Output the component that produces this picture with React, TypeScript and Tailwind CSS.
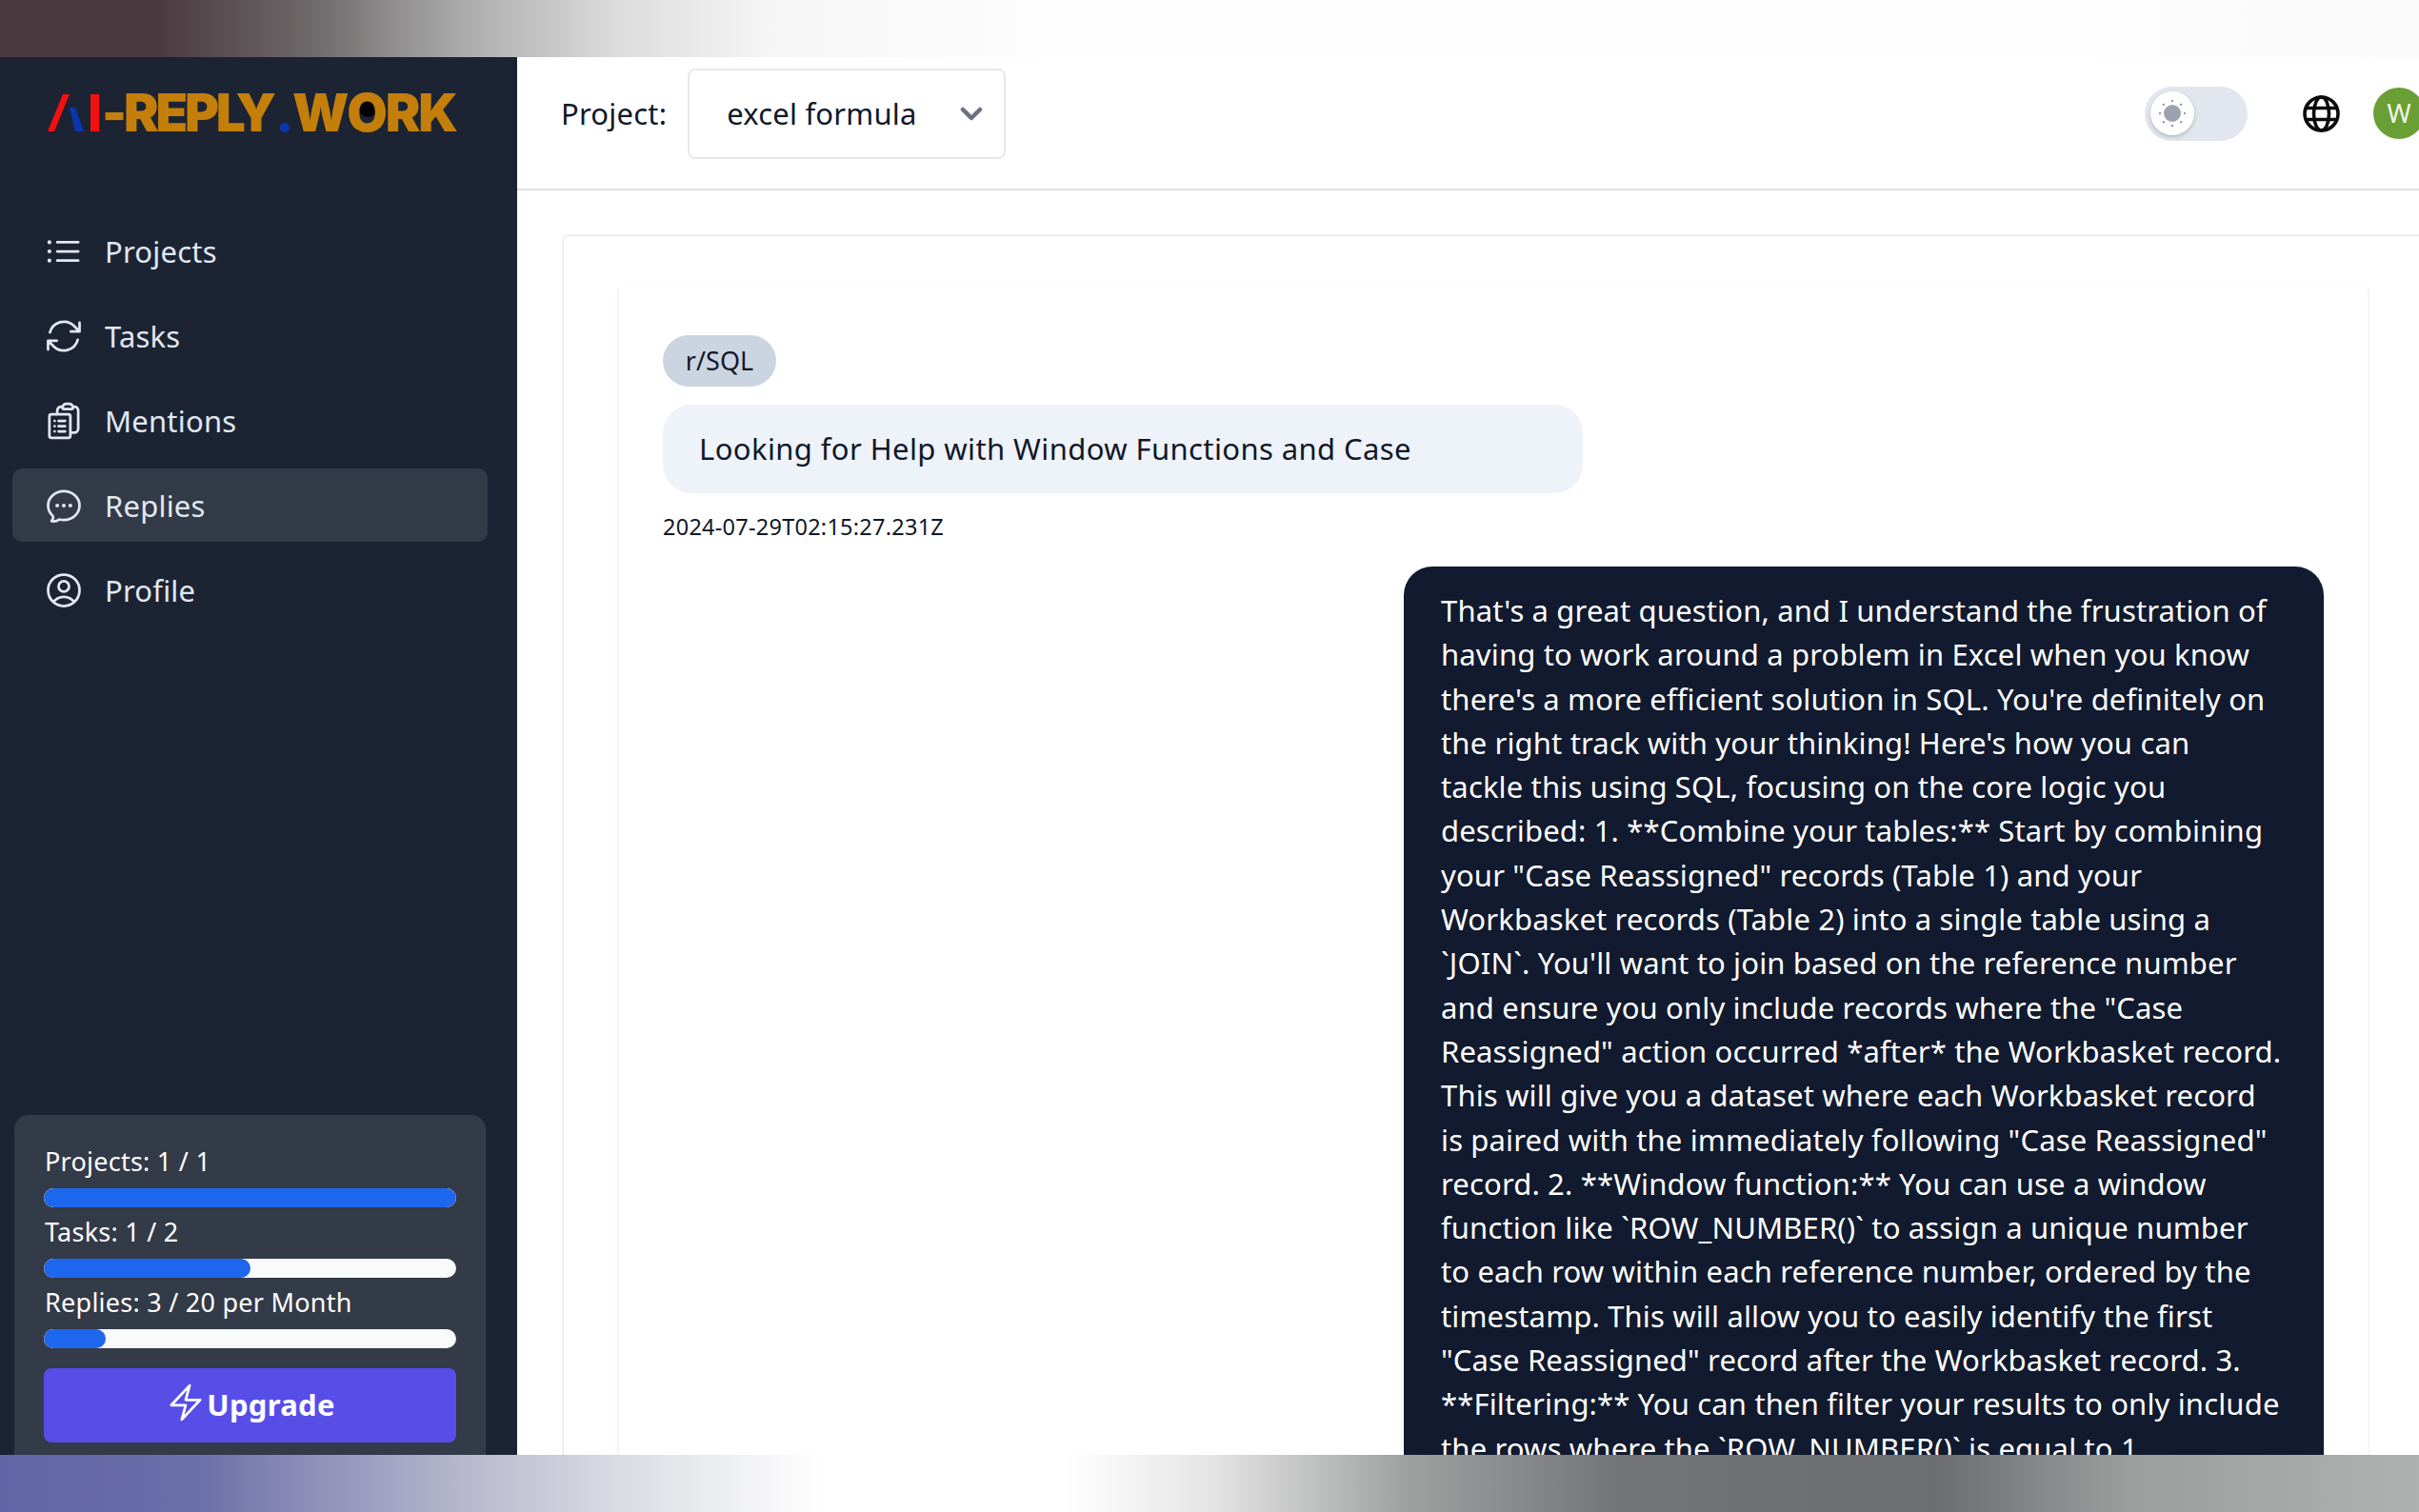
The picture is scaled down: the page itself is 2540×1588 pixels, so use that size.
import React from "react";
import {
  HiOutlineListBullet,
  HiOutlineArrowPath,
  HiOutlineClipboardDocumentList,
  HiOutlineChatBubbleOvalLeftEllipsis,
  HiOutlineUserCircle,
  HiOutlineBolt,
} from "react-icons/hi2";

const lines = [
  "That's a great question, and I understand the frustration of",
  "having to work around a problem in Excel when you know",
  "there's a more efficient solution in SQL. You're definitely on",
  "the right track with your thinking! Here's how you can",
  "tackle this using SQL, focusing on the core logic you",
  "described: 1. **Combine your tables:** Start by combining",
  'your "Case Reassigned" records (Table 1) and your',
  "Workbasket records (Table 2) into a single table using a",
  "`JOIN`. You'll want to join based on the reference number",
  'and ensure you only include records where the "Case',
  'Reassigned" action occurred *after* the Workbasket record.',
  "This will give you a dataset where each Workbasket record",
  'is paired with the immediately following "Case Reassigned"',
  "record. 2. **Window function:** You can use a window",
  "function like `ROW_NUMBER()` to assign a unique number",
  "to each row within each reference number, ordered by the",
  "timestamp. This will allow you to easily identify the first",
  '"Case Reassigned" record after the Workbasket record. 3.',
  "**Filtering:** You can then filter your results to only include",
  "the rows where the `ROW_NUMBER()` is equal to 1.",
];

const nav = [
  { label: "Projects", Icon: HiOutlineListBullet },
  { label: "Tasks", Icon: HiOutlineArrowPath },
  { label: "Mentions", Icon: HiOutlineClipboardDocumentList },
  { label: "Replies", Icon: HiOutlineChatBubbleOvalLeftEllipsis, active: true },
  { label: "Profile", Icon: HiOutlineUserCircle },
];

const usage = [
  { label: "Projects: 1 / 1", pct: 100 },
  { label: "Tasks: 1 / 2", pct: 50 },
  { label: "Replies: 3 / 20 per Month", pct: 15 },
];

function Logo() {
  return (
    <div className="ml-[50px] mt-[38px] flex h-[41px] items-center font-['Inter',sans-serif] text-[55px] font-black leading-none text-[#c47f0a]">
      <svg width="56" height="41" viewBox="0 0 56 41" className="shrink-0">
        <polygon points="0,40 16,1 23,1 7,40" fill="#f51010" />
        <polygon points="23,15 29,15 38,40 29,40" fill="#0a36b0" />
        <rect x="45" y="1" width="9" height="39" fill="#f51010" />
      </svg>
      <span className="ml-[1px] tracking-[-3.2px]">-REPLY</span>
      <span className="ml-[7px] mt-[30px] h-[10px] w-[10px] rounded-full bg-[#0a36b0]" />
      <span className="ml-[3px] flex tracking-[-2.2px]">
        <span>W</span>
        <span className="relative inline-block">
          <span className="absolute left-[12px] top-[12px] h-[20px] w-[20px] rounded-full bg-black" />
          <span className="relative">O</span>
        </span>
        <span>RK</span>
      </span>
    </div>
  );
}

function Sidebar() {
  return (
    <aside className="flex h-full w-[543px] shrink-0 flex-col bg-[#1c2434] font-['Noto_Sans',sans-serif]">
      <Logo />
      <nav className="mt-[86px] flex flex-col gap-[12px] pl-[13px] pr-[31px]">
        {nav.map(({ label, Icon, active }) => (
          <div
            key={label}
            className={`flex h-[77px] items-center gap-[21px] rounded-[10px] pl-[32px] text-[31px] tracking-[0.2px] text-[#e2e8f0] ${active ? "bg-[#333a48]" : ""}`}
          >
            <Icon className="h-[44px] w-[44px] shrink-0" />
            <span className="relative top-[1px]">{label}</span>
          </div>
        ))}
      </nav>
      <div className="mx-[15px] mb-0 mt-auto h-[357px] w-[495px] rounded-t-[15px] bg-[#333a48] px-[31px] pt-[31px]">
        <div className="flex flex-col">
          {usage.map((u) => (
            <div key={u.label} className="flex flex-col">
              <div className="h-[46px] pl-[1px] text-[27px] leading-[36px] tracking-[0.25px] text-white">{u.label}</div>
              <div className="mb-[8px] h-[20px] w-full overflow-hidden rounded-full bg-[#f8fafc]">
                <div className="h-full rounded-full bg-[#1d66ee]" style={{ width: `${u.pct}%` }} />
              </div>
            </div>
          ))}
        </div>
        <button className="mt-[13px] flex h-[78px] w-full items-center justify-center rounded-[8px] bg-[#574ee8] text-[31px] font-bold tracking-[0.3px] text-white">
          <HiOutlineBolt className="relative top-[-3px] h-[44px] w-[44px] shrink-0" />
          <span className="relative top-[-1px]">Upgrade</span>
        </button>
      </div>
    </aside>
  );
}

function Sun() {
  const dots = [0, 45, 90, 135, 180, 225, 270, 315];
  return (
    <svg width="46" height="46" viewBox="-23 -23 46 46">
      <circle r="9" fill="#9ca3af" />
      {dots.map((a) => (
        <circle
          key={a}
          cx={13 * Math.cos((a * Math.PI) / 180)}
          cy={13 * Math.sin((a * Math.PI) / 180)}
          r="1"
          fill="#6b7280"
        />
      ))}
    </svg>
  );
}

function Globe() {
  return (
    <svg width="39" height="39" viewBox="0 0 39 39" fill="none" stroke="#0a0a0a" strokeWidth="3.6">
      <circle cx="19.5" cy="19.5" r="17.5" />
      <ellipse cx="19.5" cy="19.5" rx="8" ry="17.5" />
      <line x1="3.5" y1="13.5" x2="35.5" y2="13.5" />
      <line x1="3.5" y1="25.5" x2="35.5" y2="25.5" />
    </svg>
  );
}

function Header() {
  return (
    <header className="flex h-[140px] shrink-0 items-center border-b-2 border-[#dcdfe5] pb-[20px] pl-[46px] font-['Noto_Sans',sans-serif] shadow-[0_3px_6px_rgba(0,0,0,0.03)]">
      <span className="text-[31px] tracking-[0.2px] text-[#111827]">Project:</span>
      <div className="ml-[22px] flex h-[95px] w-[334px] items-center justify-between rounded-[8px] border-2 border-[#e7e8ee] pl-[39px] pr-[22px] text-[31px] tracking-[0.2px] text-[#111827]">
        <span>excel formula</span>
        <svg width="24" height="15" viewBox="0 0 24 15" fill="none" stroke="#6b7280" strokeWidth="4.5" strokeLinecap="round" strokeLinejoin="round">
          <polyline points="3,3 12,12 21,3" />
        </svg>
      </div>
      <div className="ml-auto flex h-[57px] w-[108px] items-center rounded-full bg-[#e2e6ee] pl-[6px]">
        <div className="flex h-[46px] w-[46px] items-center justify-center rounded-full bg-white shadow-[0_2px_4px_rgba(0,0,0,0.2)]">
          <Sun />
        </div>
      </div>
      <div className="ml-[58px]">
        <Globe />
      </div>
      <div className="ml-[35px] mr-[-6px] flex h-[54px] w-[54px] shrink-0 items-center justify-center rounded-full bg-[#6a9f35] text-[27px] text-[#eef5e8]">
        W
      </div>
    </header>
  );
}

function Content() {
  return (
    <main className="min-h-0 flex-1 overflow-hidden bg-white pl-[47px] pt-[46px] font-['Noto_Sans',sans-serif]">
      <div className="h-[1400px] w-[2100px] rounded-[8px] border-2 border-[#eceef3] bg-white pl-[56px] pt-[55px]">
        <div className="h-[1400px] w-[1840px] border-x-2 border-[#f4f5f7] px-[46px] pt-[49px] text-[#111827] shadow-[0_0_8px_rgba(0,0,0,0.02)]">
          <div className="flex h-[54px] w-[119px] items-center justify-center rounded-full bg-[#cbd5e1] text-[27px] tracking-[0px]">
            r/SQL
          </div>
          <div className="mt-[19px] flex h-[93px] w-[966px] items-center rounded-[30px] bg-[#eef2f9] pl-[38px] text-[31px] tracking-[0.4px]">
            Looking for Help with Window Functions and Case
          </div>
          <div className="mt-[19px] h-[32px] text-[23.5px] leading-[32px] tracking-[0.25px]">2024-07-29T02:15:27.231Z</div>
          <div className="ml-auto mt-[26px] w-[966px] rounded-[30px] bg-[#111a2e] px-[39px] pt-[23px] pb-[40px] text-[31px] leading-[46.3px] tracking-[0.15px] text-white">
            {lines.map((l) => (
              <div key={l} className="whitespace-nowrap">
                {l}
              </div>
            ))}
          </div>
        </div>
      </div>
    </main>
  );
}

export default function App() {
  return (
    <div className="flex h-[1588px] w-[2540px] flex-col overflow-hidden bg-white">
      <div className="h-[60px] shrink-0 bg-[linear-gradient(90deg,#4a3a40_0%,#4a3a40_6.4%,#6d6869_12.8%,#aaaaaa_19%,#dcdcdc_25.5%,#f6f6f6_32%,#fefefe_44%,#fefefe_84%,#fafafa_100%)]" />
      <div className="flex h-[1468px] shrink-0 overflow-hidden">
        <Sidebar />
        <div className="flex min-w-0 flex-1 flex-col">
          <Header />
          <Content />
        </div>
      </div>
      <div className="h-[60px] shrink-0 bg-[linear-gradient(90deg,#6265a5_0%,#6a6ea8_8%,#9696bc_14%,#bcbdd0_20%,#e1e2e7_27%,#ffffff_34%,#ffffff_44%,#e5e5e5_50%,#a0a1a1_58%,#727476_67%,#6c6d6f_80%,#9c9d9d_88%,#b0b1b1_100%)]" />
    </div>
  );
}
